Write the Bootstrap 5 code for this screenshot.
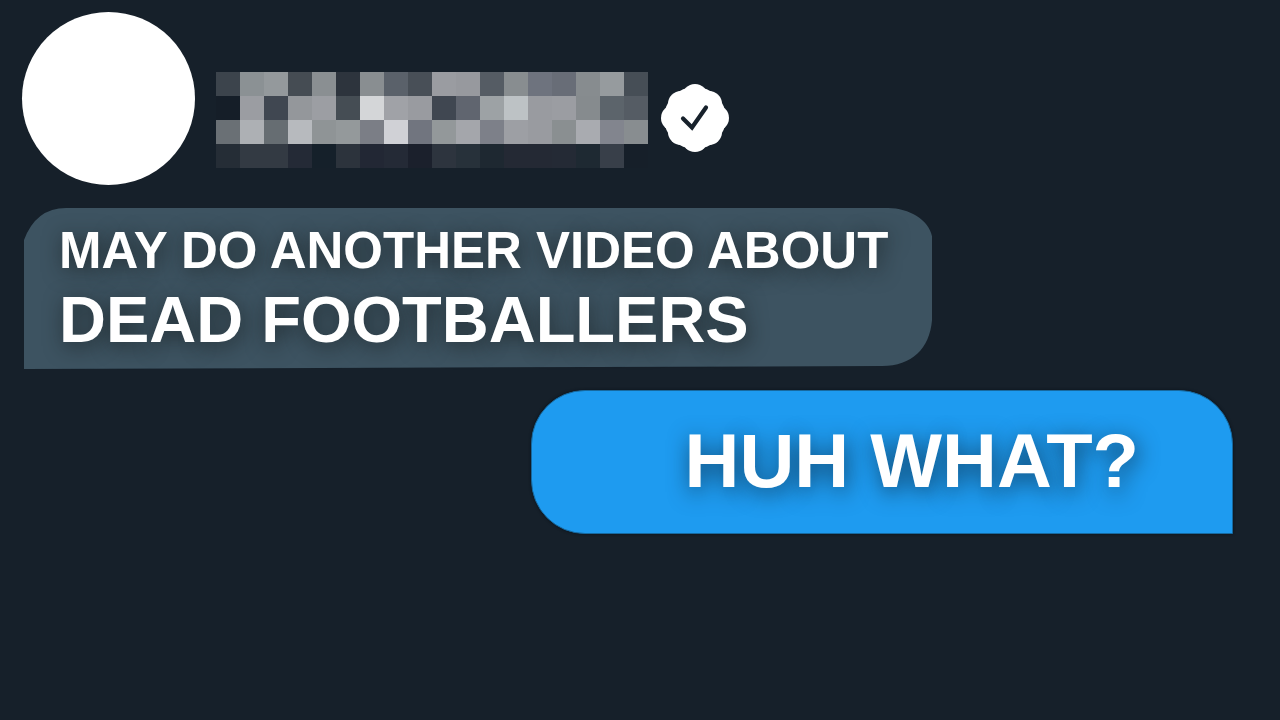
<!DOCTYPE html>
<html lang="en">
<head>
<meta charset="utf-8">
<meta name="viewport" content="width=device-width, initial-scale=1">
<title>Messages</title>
<link href="https://cdn.jsdelivr.net/npm/bootstrap@5.3.0/dist/css/bootstrap.min.css" rel="stylesheet">
<style>
  body { background: #16202a; color: #fff; font-family: "Liberation Sans", Arial, sans-serif; font-weight: 700; }
  .chat { padding: 12px 47px 24px 22px; }
  .avatar { width: 173px; height: 173px; }
  .profile { gap: 21px; }
  .handle { gap: 12px; padding-top: 60px; }
  .mosaic { display: grid; grid-template-columns: repeat(18, 24px); grid-auto-rows: 24px; }
  .verified { width: 70px; height: 70px; margin-top: 11px; }
  .bubble { white-space: nowrap; }
  .received { position: relative; margin: 23px 0 0 2px; padding: 9px 44px 15px 35px;
    text-shadow: 2px 4px 20px rgba(20, 25, 25, .7); }
  .received-shape { position: absolute; inset: 0; width: 100%; height: 100%; z-index: -1; }
  .sent { background: #1e9bf0; margin-top: 21px; padding: 26px 93px 28px 153px; border: 1px solid #17699f;
    border-radius: 54px 54px 0 54px; box-shadow: 0 0 3px #0a1119;
    text-shadow: 2px 5px 22px rgba(10, 30, 45, .7); }
  .line-one { font-size: 51px; line-height: 68px; }
  .line-two { font-size: 65px; line-height: 69px; }
  .reply { font-size: 76px; line-height: 88px; }
</style>
</head>
<body>
<main class="chat d-flex flex-column">
  <header class="profile d-flex align-items-start">
    <div class="avatar rounded-circle bg-white flex-shrink-0"></div>
    <div class="handle d-flex align-items-start">
      <div class="mosaic" id="mosaic" role="img" aria-label="Hidden name"></div>
      <svg class="verified" viewBox="0 0 70 70" role="img" aria-label="Verified">
        <g fill="#fff">
          <circle cx="35" cy="35" r="31"/>
          <circle cx="35" cy="14" r="13"/><circle cx="49" cy="21" r="13"/>
          <circle cx="56" cy="35" r="13"/><circle cx="49" cy="49" r="13"/>
          <circle cx="35" cy="56" r="13"/><circle cx="21" cy="49" r="13"/>
          <circle cx="14" cy="35" r="13"/><circle cx="21" cy="21" r="13"/>
        </g>
        <path d="M23 35.5 32 44.5 46 24.5" fill="none" stroke="#17212b" stroke-width="4.2" stroke-linecap="round"/>
      </svg>
    </div>
  </header>
  <div class="bubble received align-self-start">
    <svg class="received-shape" viewBox="0 0 908 161" preserveAspectRatio="none" aria-hidden="true">
      <path d="M0 161V32Q12 0 42 0H864C886 0 908 14 908 32V105C908 138 890 158 858 158Z" fill="#3d5361"/>
    </svg>
    <p class="line-one mb-0">MAY DO ANOTHER VIDEO ABOUT</p>
    <p class="line-two mb-0">DEAD FOOTBALLERS</p>
  </div>
  <div class="bubble sent align-self-end">
    <p class="reply mb-0">HUH WHAT?</p>
  </div>
</main>
<script src="https://cdn.jsdelivr.net/npm/bootstrap@5.3.0/dist/js/bootstrap.bundle.min.js"></script>
<script>
  // One row of hex colours per line of the pixelated name.
  const rows = [
    "3c444c 8b9194 94999c 454c53 8a8f92 2d343d 898e91 5a616a 484f57 9a9ca1 97999e 555c64 888d90 6e737e 686d77 878c8f 969b9e 464e56",
    "151e28 9b9da2 404751 94979b 9c9ea3 454d54 d4d6d8 a0a2a7 999ba0 404751 60656f 9da2a5 bdc2c5 999ba0 9b9da2 868b8e 5c646b 555c64",
    "6a7075 adb0b4 666d72 b7babe 8f9496 94999b 7b7e86 d0d1d6 71757f 93989a a4a6ab 7d8089 9d9fa4 999ba0 8a8f91 a9abb0 82858e 888d90",
    "252d36 333a43 333a43 242a36 15202a 2c333c 222734 242a36 1b202c 2d343e 27313a 1e2831 242934 242934 242a35 1e2932 383f49 161f29"
  ];
  const mosaic = document.getElementById("mosaic");
  rows.join(" ").split(" ").forEach(function (hex) {
    const cell = document.createElement("span");
    cell.style.backgroundColor = "#" + hex;
    mosaic.appendChild(cell);
  });
</script>
</body>
</html>
